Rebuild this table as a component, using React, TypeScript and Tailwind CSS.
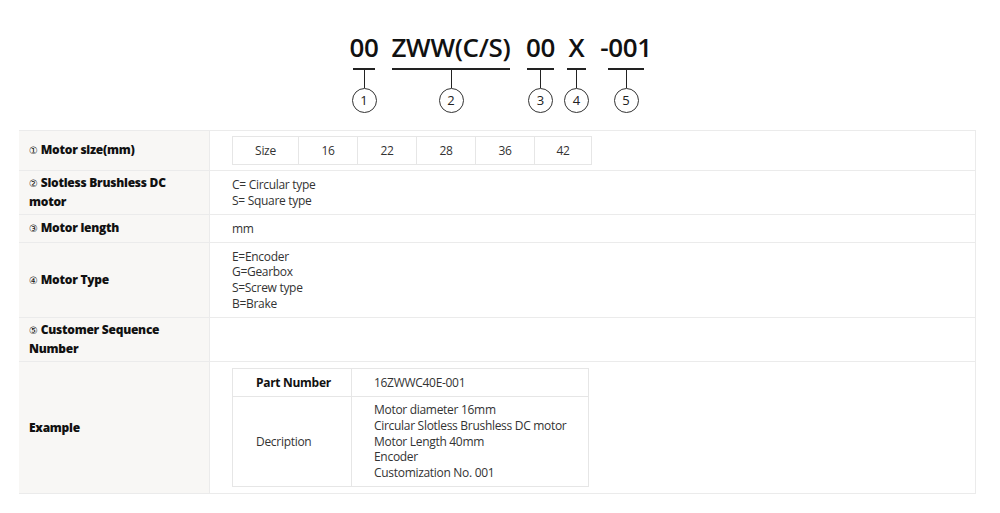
import React from "react";

const items = [
  { t: "00", w: 22, n: "1", ml: 353 },
  { t: "ZWW(C/S)", w: 118, n: "2", ml: 17 },
  { t: "00", w: 27, n: "3", ml: 17 },
  { t: "X", w: 19, n: "4", ml: 13 },
  { t: "-001", w: 36, n: "5", ml: 22 },
];

function Row({
  h,
  label,
  children,
}: {
  h: string;
  label: React.ReactNode;
  children?: React.ReactNode;
}) {
  return (
    <div className={`flex ${h} border-b border-[#ebebeb]`}>
      <div className="w-[191px] shrink-0 bg-[#f8f7f5] border-r border-[#ebebeb] flex items-center pl-[10px] pr-3 text-[12px] leading-[18px] font-extrabold tracking-[-0.25px] text-[#111]">
        <div>{label}</div>
      </div>
      <div className="flex-1 flex items-center pl-[22px] text-[12px] leading-[16px] tracking-[-0.3px] text-[#333]">
        {children}
      </div>
    </div>
  );
}

const C = ({ c }: { c: string }) => (
  <span className="text-[10px] font-normal mr-[3px]" style={{ fontFamily: "'DejaVu Sans', sans-serif" }}>
    {c}
  </span>
);

export default function App() {
  return (
    <div className="w-[1000px] h-[513px] bg-white overflow-hidden" style={{ fontFamily: "'Open Sans', 'Noto Sans', sans-serif" }}>
      <div className="flex pt-[34px] h-[113px]">
        {items.map((it, i) => (
          <div
            key={i}
            className="flex flex-col items-center shrink-0"
            style={{ width: it.w, marginLeft: it.ml }}
          >
            <div className="text-[26px] leading-[26px] font-semibold tracking-[-0.3px] text-[#111] whitespace-nowrap">{it.t}</div>
            <div className="w-full h-[2px] bg-[#222] mt-[8px]" />
            <div className="w-px h-[18px] bg-[#222]" />
            <div className="w-[25px] h-[25px] shrink-0 rounded-full border border-[#333] flex items-center justify-center text-[13px] text-[#222] leading-none">
              {it.n}
            </div>
          </div>
        ))}
      </div>

      <div className="ml-[19px] mt-[17px] w-[957px] border-t border-r border-[#ebebeb]">
        <Row h="h-[40px]" label={<><C c="①" />Motor size(mm)</>}>
          <table className="border-collapse text-center text-[12px] text-[#333]">
            <tbody>
              <tr className="h-[28px]">
                {["Size", "16", "22", "28", "36", "42"].map((s, i) => (
                  <td
                    key={i}
                    className="border border-[#e6e6e6] p-0"
                    style={{ width: i === 0 ? 66 : i === 5 ? 57 : 59 }}
                  >
                    {s}
                  </td>
                ))}
              </tr>
            </tbody>
          </table>
        </Row>
        <Row h="h-[44px]" label={<><C c="②" />Slotless Brushless DC<br />motor</>}>
          <div>
            <div>C= Circular type</div>
            <div>S= Square type</div>
          </div>
        </Row>
        <Row h="h-[28px]" label={<><C c="③" />Motor length</>}>
          <div>mm</div>
        </Row>
        <Row h="h-[75px]" label={<><C c="④" />Motor Type</>}>
          <div className="leading-[15.7px]">
            <div>E=Encoder</div>
            <div>G=Gearbox</div>
            <div>S=Screw type</div>
            <div>B=Brake</div>
          </div>
        </Row>
        <Row h="h-[44px]" label={<><C c="⑤" />Customer Sequence<br />Number</>} />
        <Row h="h-[132px]" label={<>Example</>}>
          <table className="border-collapse text-[12px] text-[#333]">
            <tbody>
              <tr className="h-[28px]">
                <td className="w-[119px] border border-[#e6e6e6] text-left pl-[23px] py-0 pr-0 font-bold text-[#111]">Part Number</td>
                <td className="w-[237px] border border-[#e6e6e6] pl-[22px] p-0">16ZWWC40E-001</td>
              </tr>
              <tr className="h-[90px]">
                <td className="border border-[#e6e6e6] text-left pl-[23px] py-0 pr-0">Decription</td>
                <td className="border border-[#e6e6e6] pl-[22px] py-0 leading-[15.8px] whitespace-nowrap">
                  <div>Motor diameter 16mm</div>
                  <div>Circular Slotless Brushless DC motor</div>
                  <div>Motor Length 40mm</div>
                  <div>Encoder</div>
                  <div>Customization No. 001</div>
                </td>
              </tr>
            </tbody>
          </table>
        </Row>
      </div>
    </div>
  );
}
